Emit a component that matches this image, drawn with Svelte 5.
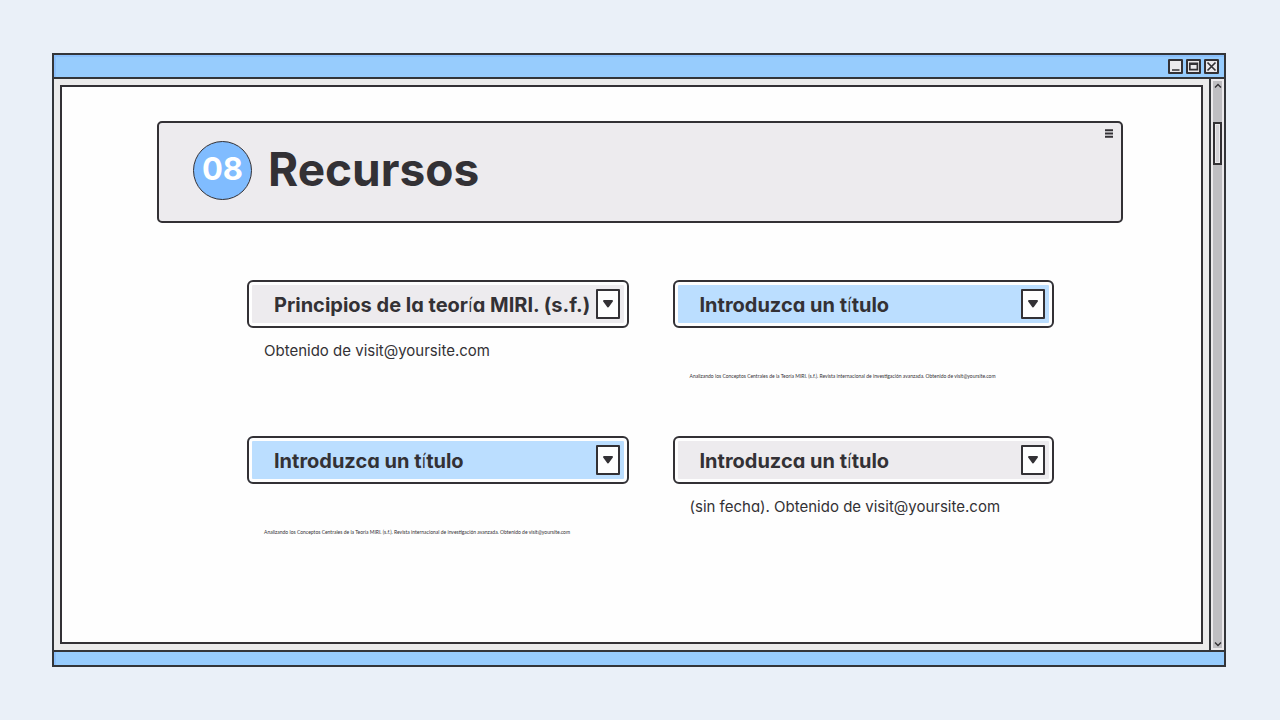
<script>
	const small =
		"Analizando los Conceptos Centrales de la Teoría MIRI. (s.f.). Revista internacional de investigación avanzada. Obtenido de visit@yoursite.com";

	let resources = $state([
		{ title: "Principios de la teoría MIRI. (s.f.)", text: "Obtenido de visit@yoursite.com", open: true },
		{ title: "Introduzca un título", text: small, blue: true, tiny: true, open: true },
		{ title: "Introduzca un título", text: small, blue: true, tiny: true, open: true },
		{ title: "Introduzca un título", text: "(sin fecha). Obtenido de visit@yoursite.com", open: true }
	]);
</script>

<div class="desktop">
	<div class="window">
		<div class="titlebar">
			<button class="control" aria-label="Minimizar">
				<svg viewBox="0 0 15 15"><path d="M4 11h7.5" /></svg>
			</button>
			<button class="control" aria-label="Maximizar">
				<svg viewBox="0 0 15 15"><path d="M3.8 4.3h7.6v6.4H3.8zM3.8 5.2h7.6" /></svg>
			</button>
			<button class="control" aria-label="Cerrar">
				<svg viewBox="0 0 15 15"><path d="M3.5 3.5l8 8M11.5 3.5l-8 8" /></svg>
			</button>
		</div>

		<div class="body">
			<main class="page">
				<header class="hero">
					<span class="number">08</span>
					<h1>Recursos</h1>
					<button class="menu" aria-label="Menú">
						<svg viewBox="0 0 8 9"><path d="M0 1.2h8M0 4.5h8M0 7.8h8" /></svg>
					</button>
				</header>

				<div class="grid">
					{#each resources as item, i}
						<section>
							<h2>
								<button
									class="bar"
									class:blue={item.blue}
									aria-expanded={item.open}
									aria-controls="text-{i}"
									onclick={() => (item.open = !item.open)}
								>
									<span class="label">
										{#each item.title.split(/(í)/) as part}{#if part === "í"}<span class="light">í</span>{:else}{part}{/if}{/each}
									</span>
									<span class="arrow">
										<svg viewBox="0 0 12 8"><path d="M2 1h8L6 6.5z" /></svg>
									</span>
								</button>
							</h2>
							{#if item.open}
								<p id="text-{i}" class:tiny={item.tiny}>{item.text}</p>
							{/if}
						</section>
					{/each}
				</div>
			</main>

			<div class="scrollbar">
				<button aria-label="Subir">
					<svg viewBox="0 0 8 6"><path d="M1 4.5l3-3 3 3" /></svg>
				</button>
				<div class="track">
					<div class="thumb"></div>
				</div>
				<button aria-label="Bajar">
					<svg viewBox="0 0 8 6"><path d="M1 1.5l3 3 3-3" /></svg>
				</button>
			</div>
		</div>

		<div class="footer"></div>
	</div>
</div>

<style>
	:global(body) {
		margin: 0;
		background: #eaf0f8;
	}
	.desktop,
	.desktop * {
		box-sizing: border-box;
	}
	.desktop {
		min-height: 100vh;
		padding: 53px 54px 53px 52px;
		display: flex;
		font-family: "Inter", sans-serif;
		font-feature-settings: "cv11";
		color: #333135;
		background: #eaf0f8;
	}
	button {
		padding: 0;
		border: none;
		background: none;
		font: inherit;
		font-feature-settings: inherit;
		color: inherit;
		cursor: pointer;
	}
	svg {
		display: block;
		fill: none;
		stroke: #333135;
		stroke-width: 2;
	}
	.window {
		flex: 1;
		display: flex;
		flex-direction: column;
		border: 2px solid #333539;
		background: #ebebeb;
	}
	.titlebar {
		height: 24px;
		padding-right: 5px;
		display: flex;
		align-items: center;
		justify-content: flex-end;
		gap: 3px;
		border-bottom: 2px solid #333539;
		background: #97ccfd;
		box-shadow: inset 2px 2px 0 #8abffb;
	}
	.control {
		width: 15px;
		height: 15px;
	}
	.control svg {
		width: 15px;
		height: 15px;
		border-radius: 1px;
		background: #ebe9ec;
		outline: 2px solid #333135;
		outline-offset: -2px;
		stroke-width: 1.7;
	}
	.body {
		flex: 1;
		display: flex;
	}
	.page {
		flex: 1;
		margin: 6px;
		padding: 34px 78px 34px 95px;
		border: 2px solid #333135;
		background: #fefefe;
	}
	.hero {
		height: 102px;
		padding: 0 8px 4px 34px;
		display: flex;
		align-items: center;
		border: 2px solid #333135;
		border-radius: 5px;
		background: #edebee;
	}
	.number {
		width: 59px;
		height: 59px;
		padding-bottom: 4px;
		display: flex;
		align-items: center;
		justify-content: center;
		border: 1px solid #333135;
		border-radius: 50%;
		background: #80bcff;
		color: #fff;
		font-size: 31px;
		font-weight: 700;
	}
	h1 {
		margin: 0 0 2px 16px;
		font-size: 46px;
		line-height: 56px;
		font-weight: 700;
	}
	.menu {
		margin-left: auto;
		margin-top: 6px;
		align-self: flex-start;
	}
	.menu svg {
		width: 8px;
		height: 9px;
	}
	.grid {
		margin: 57px 69px 0 90px;
		display: grid;
		grid-template-columns: 1fr 1fr;
		grid-auto-rows: 156px;
		column-gap: 44px;
	}
	h2 {
		margin: 0;
		font-size: 20px;
		line-height: 24px;
		font-weight: 700;
	}
	.bar {
		width: 100%;
		height: 48px;
		padding: 0 4px 0 21px;
		display: flex;
		align-items: center;
		justify-content: space-between;
		border: 2px solid #333135;
		border-radius: 6px;
		background: #edebee;
		box-shadow: inset 0 0 0 3px #fefefe;
		text-align: left;
		white-space: nowrap;
	}
	.bar.blue {
		background: #bbdeff;
	}
	.label {
		padding: 2px 0 0 4px;
	}
	.light {
		font-weight: 300;
	}
	.arrow {
		width: 24px;
		height: 30px;
		margin-right: 3px;
		display: flex;
		align-items: center;
		justify-content: center;
		border: 2px solid #333135;
		border-radius: 1px;
		background: #fefefe;
	}
	.arrow svg {
		width: 12px;
		height: 8px;
		fill: #333135;
		stroke-linejoin: round;
	}
	p {
		margin: 12px 0 0 17px;
		font-size: 15px;
		line-height: 22px;
	}
	p.tiny {
		margin-top: 44px;
		font-family: "Lato", sans-serif;
		font-size: 5px;
		line-height: 8px;
	}
	.scrollbar {
		width: 15px;
		padding: 2px;
		display: flex;
		flex-direction: column;
		border-left: 2px solid #333539;
		background: #ebe9ec;
	}
	.scrollbar button {
		height: 9px;
		display: flex;
		align-items: center;
		justify-content: center;
		background: #bfbec2;
	}
	.scrollbar button svg {
		width: 8px;
		height: 6px;
		stroke-width: 1.4;
	}
	.track {
		flex: 1;
		padding-top: 32px;
		background: #bfbec2;
	}
	.thumb {
		height: 43px;
		border: 2px solid #333135;
		background: #d4d3d8;
		box-shadow: inset 0 0 0 1px #ebe9ec;
	}
	.footer {
		height: 15px;
		border-top: 2px solid #333539;
		background: #97ccfd;
		box-shadow: inset 2px 0 0 #8abffb;
	}
</style>
